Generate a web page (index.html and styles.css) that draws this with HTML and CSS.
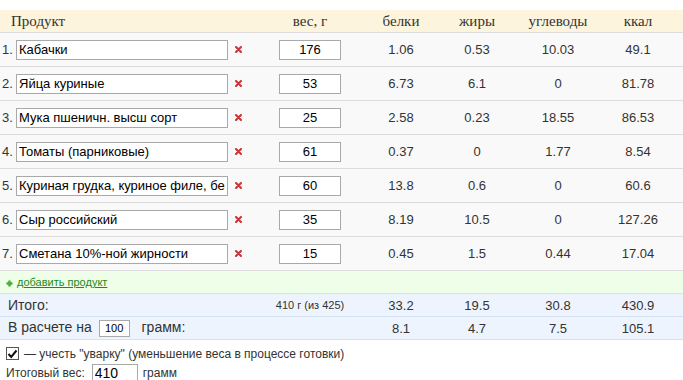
FILE: index.html
```html
<!DOCTYPE html>
<html lang="ru">
<head>
<meta charset="utf-8">
<link rel="stylesheet" href="styles.css">
</head>
<body>
<div class="calc">
<table class="grid">
  <colgroup>
    <col class="c-prod"><col class="c-del"><col class="c-wt"><col class="c-b"><col class="c-z"><col class="c-u"><col class="c-k">
  </colgroup>
  <thead>
    <tr class="head">
      <th class="h-prod">Продукт</th>
      <th></th>
      <th>вес, г</th>
      <th>белки</th>
      <th>жиры</th>
      <th>углеводы</th>
      <th class="last">ккал</th>
    </tr>
  </thead>
  <tbody>
    <tr class="item">
      <td class="prod"><span class="num">1.</span><input class="name" type="text" value="Кабачки"></td>
      <td class="del"><svg width="7" height="7" viewBox="0 0 7 7"><path d="M1 1L6 6M6 1L1 6" stroke="#c93434" stroke-width="2" stroke-linecap="round"/></svg></td>
      <td><input class="wt" type="text" value="176"></td>
      <td>1.06</td><td>0.53</td><td>10.03</td><td class="last">49.1</td>
    </tr>
    <tr class="item">
      <td class="prod"><span class="num">2.</span><input class="name" type="text" value="Яйца куриные"></td>
      <td class="del"><svg width="7" height="7" viewBox="0 0 7 7"><path d="M1 1L6 6M6 1L1 6" stroke="#c93434" stroke-width="2" stroke-linecap="round"/></svg></td>
      <td><input class="wt" type="text" value="53"></td>
      <td>6.73</td><td>6.1</td><td>0</td><td class="last">81.78</td>
    </tr>
    <tr class="item">
      <td class="prod"><span class="num">3.</span><input class="name" type="text" value="Мука пшеничн. высш сорт"></td>
      <td class="del"><svg width="7" height="7" viewBox="0 0 7 7"><path d="M1 1L6 6M6 1L1 6" stroke="#c93434" stroke-width="2" stroke-linecap="round"/></svg></td>
      <td><input class="wt" type="text" value="25"></td>
      <td>2.58</td><td>0.23</td><td>18.55</td><td class="last">86.53</td>
    </tr>
    <tr class="item">
      <td class="prod"><span class="num">4.</span><input class="name" type="text" value="Томаты (парниковые)"></td>
      <td class="del"><svg width="7" height="7" viewBox="0 0 7 7"><path d="M1 1L6 6M6 1L1 6" stroke="#c93434" stroke-width="2" stroke-linecap="round"/></svg></td>
      <td><input class="wt" type="text" value="61"></td>
      <td>0.37</td><td>0</td><td>1.77</td><td class="last">8.54</td>
    </tr>
    <tr class="item">
      <td class="prod"><span class="num">5.</span><input class="name" type="text" value="Куриная грудка, куриное филе, без кожи"></td>
      <td class="del"><svg width="7" height="7" viewBox="0 0 7 7"><path d="M1 1L6 6M6 1L1 6" stroke="#c93434" stroke-width="2" stroke-linecap="round"/></svg></td>
      <td><input class="wt" type="text" value="60"></td>
      <td>13.8</td><td>0.6</td><td>0</td><td class="last">60.6</td>
    </tr>
    <tr class="item">
      <td class="prod"><span class="num">6.</span><input class="name" type="text" value="Сыр российский"></td>
      <td class="del"><svg width="7" height="7" viewBox="0 0 7 7"><path d="M1 1L6 6M6 1L1 6" stroke="#c93434" stroke-width="2" stroke-linecap="round"/></svg></td>
      <td><input class="wt" type="text" value="35"></td>
      <td>8.19</td><td>10.5</td><td>0</td><td class="last">127.26</td>
    </tr>
    <tr class="item">
      <td class="prod"><span class="num">7.</span><input class="name" type="text" value="Сметана 10%-ной жирности"></td>
      <td class="del"><svg width="7" height="7" viewBox="0 0 7 7"><path d="M1 1L6 6M6 1L1 6" stroke="#c93434" stroke-width="2" stroke-linecap="round"/></svg></td>
      <td><input class="wt" type="text" value="15"></td>
      <td>0.45</td><td>1.5</td><td>0.44</td><td class="last">17.04</td>
    </tr>
    <tr class="add">
      <td colspan="7"><svg class="plus" width="7" height="7" viewBox="0 0 7 7"><path d="M3.5 0.5V6.5M0.5 3.5H6.5" stroke="#4caa3c" stroke-width="2.4"/></svg><a href="#" class="add-link">добавить продукт</a></td>
    </tr>
    <tr class="total">
      <td colspan="2" class="t-label">Итого:</td>
      <td class="t-wt">410 г (из 425)</td>
      <td>33.2</td><td>19.5</td><td>30.8</td><td class="last">430.9</td>
    </tr>
    <tr class="total per">
      <td colspan="3" class="t-label">В расчете на <input class="per-in" type="text" value="100"> грамм:</td>
      <td>8.1</td><td>4.7</td><td>7.5</td><td class="last">105.1</td>
    </tr>
  </tbody>
</table>
<div class="opts">
  <label class="opt"><span class="check"><svg width="11" height="10" viewBox="0 0 11 10"><path d="M1.5 5L4.2 8L9.5 1.5" fill="none" stroke="#111" stroke-width="2"/></svg></span>— учесть "уварку" (уменьшение веса в процессе готовки)</label>
  <div class="opt final">Итоговый вес: <input class="final-in" type="text" value="410"> грамм</div>
</div>
</div>
</body>
</html>
```

FILE: styles.css
```css
html, body {
  margin: 0;
  padding: 0;
  background: #fff;
}
.calc {
  padding-top: 10px;
  font-family: "Liberation Sans", Arial, sans-serif;
  color: #333;
}
.grid {
  width: 683px;
  border-collapse: collapse;
  table-layout: fixed;
}
.c-prod { width: 230px; }
.c-del { width: 30px; }
.c-wt { width: 100px; }
.c-b { width: 82px; }
.c-z { width: 70px; }
.c-u { width: 92px; }
.c-k { width: 79px; }

.head {
  background: #fdf4dd;
  height: 22px;
  border-bottom: 1px solid #dcdcdc;
}
.head th {
  font-family: "Liberation Serif", "Times New Roman", serif;
  font-weight: normal;
  font-size: 15px;
  color: #333;
  text-align: center;
  padding: 0;
  line-height: 22px;
}
.head th.h-prod {
  text-align: left;
  padding-left: 11px;
}
.grid .last {
  padding-right: 11px;
}
.item {
  background: #f9f9f9;
  height: 34px;
  border-bottom: 1px solid #dcdcdc;
}
.item td {
  font-size: 13px;
  text-align: center;
  padding: 0;
  color: #333;
}
.item td.prod {
  text-align: left;
  white-space: nowrap;
}
.num {
  display: inline-block;
  width: 16px;
  padding-left: 2px;
  box-sizing: border-box;
  font-size: 13px;
  color: #333;
  vertical-align: middle;
}
input {
  font-family: "Liberation Sans", Arial, sans-serif;
  border: 1px solid #a9a9a9;
  background: #fff;
  color: #000;
  margin: 0;
  box-sizing: border-box;
  vertical-align: middle;
  outline: none;
}
.name {
  width: 212px;
  height: 20px;
  font-size: 13px;
  padding: 0 2px;
}
.item td.del {
  text-align: left;
  padding-left: 5px;
}
.del svg {
  display: block;
}
.wt {
  width: 62px;
  height: 20px;
  font-size: 13px;
  text-align: center;
  padding: 0;
}
.add {
  background: #effee9;
  height: 22px;
}
.add td {
  padding: 0 0 0 6px;
  font-size: 11px;
  line-height: 22px;
  border-bottom: 1px solid #d3e1f2;
}
.plus {
  vertical-align: -1px;
  margin-right: 4px;
}
.add-link {
  color: #1c8a1c;
  text-decoration: underline;
}
.total {
  background: #eef4fd;
  height: 23px;
  border-bottom: 1px solid #d3e1f2;
}
.total td {
  font-size: 13px;
  text-align: center;
  padding: 0;
  color: #333;
}
.total td.t-label {
  text-align: left;
  padding-left: 8px;
  font-size: 14px;
}
.total td.t-wt {
  font-size: 11px;
}
.per-in {
  width: 31px;
  height: 17px;
  font-size: 11px;
  text-align: center;
  padding: 0;
  margin: 0 8px 0 3px;
  vertical-align: 0;
}
.opts {
  padding: 4px 0 0 6px;
  font-size: 12px;
  color: #333;
}
.opt {
  display: flex;
  align-items: center;
  height: 19px;
}
.check {
  width: 13px;
  height: 13px;
  box-sizing: border-box;
  border: 1px solid #555;
  background: #fff;
  display: inline-flex;
  align-items: center;
  justify-content: center;
  margin-right: 5px;
}
.final-in {
  width: 46px;
  height: 17px;
  font-size: 14px;
  padding: 0 2px;
  margin: 0 5px 0 7px;
}
```
